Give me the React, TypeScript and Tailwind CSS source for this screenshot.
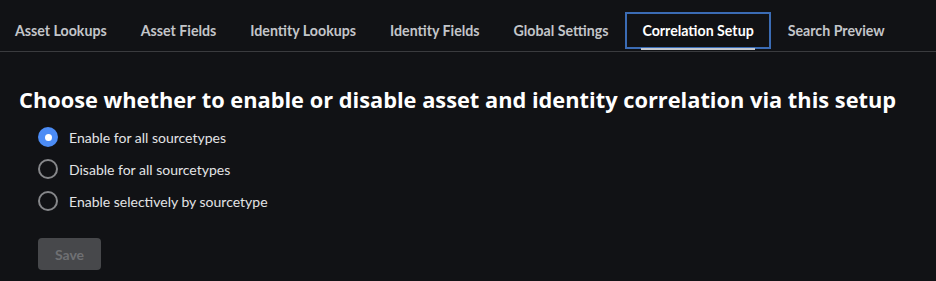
import { useState } from "react";

const tabs = [
  "Asset Lookups",
  "Asset Fields",
  "Identity Lookups",
  "Identity Fields",
  "Global Settings",
  "Correlation Setup",
  "Search Preview",
];

const options = [
  "Enable for all sourcetypes",
  "Disable for all sourcetypes",
  "Enable selectively by sourcetype",
];

export default function App() {
  const [active] = useState("Correlation Setup");
  const [choice, setChoice] = useState(0);

  return (
    <div
      className="h-[281px] w-[936px] overflow-hidden bg-[#111215] text-white"
      style={{ fontFamily: "Lato, 'Liberation Sans', sans-serif" }}
    >
      <div className="flex h-[52px] items-end border-b border-[#3a3b3e]">
        <div className="ml-[-2px] flex">
          {tabs.map((tab) => {
            const on = tab === active;
            return (
              <div
                key={tab}
                className={`relative mb-[2px] flex h-[37px] items-center px-[15px] text-[14.2px] font-bold ${
                  on ? "border-2 border-[#3b6cb5] text-white" : "border-2 border-transparent text-[#c3c5c9]"
                }`}
              >
                {tab}
                {on && (
                  <span className="absolute bottom-[-3px] left-[14px] right-[14px] h-[2px] bg-[#c4c8d0]" />
                )}
              </div>
            );
          })}
        </div>
      </div>

      <div className="px-[19px] pt-[34px]">
        <h1
          className="text-[21.8px] font-bold leading-[28px] text-white"
          style={{ fontFamily: "'Open Sans', Lato, sans-serif" }}
        >
          Choose whether to enable or disable asset and identity correlation via this setup
        </h1>
        <div className="mt-[13px] flex flex-col gap-[12px] pl-[19px]">
          {options.map((opt, i) => (
            <label key={opt} className="flex h-[20px] cursor-pointer items-center gap-[11px]" onClick={() => setChoice(i)}>
              {choice === i ? (
                <span className="flex h-[20px] w-[20px] items-center justify-center rounded-full bg-[#4c8cf5]">
                  <span className="h-[7px] w-[7px] rounded-full bg-white" />
                </span>
              ) : (
                <span className="h-[20px] w-[20px] rounded-full border-2 border-[#86878a]" />
              )}
              <span className="text-[14px] text-[#e3e4e6]">{opt}</span>
            </label>
          ))}
        </div>
        <button
          disabled
          className="mt-[27px] ml-[19px] h-[32px] w-[63px] rounded-[4px] bg-[#47484b] text-[14px] font-bold text-[#6f7073]"
        >
          Save
        </button>
      </div>
    </div>
  );
}
